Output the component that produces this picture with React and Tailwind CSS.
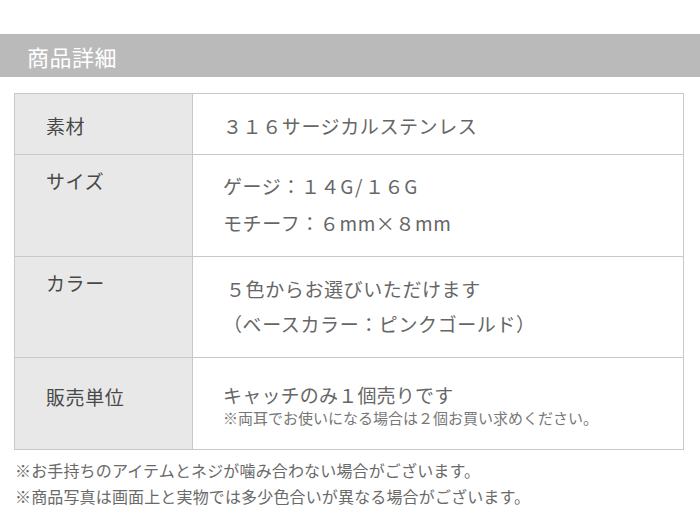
import React from "react";

const font = { fontFamily: '"Noto Sans CJK JP", "Noto Sans", sans-serif' };

export default function App() {
  return (
    <div className="w-[700px] h-[526px] bg-white overflow-hidden" style={font}>
      {/* section header */}
      <div className="mt-[34px] h-[43px] bg-[#bbbaba] pl-[27px] flex items-center text-white text-[22px] tracking-[0.5px] leading-none">
        商品詳細
      </div>

      {/* spec table */}
      <div className="ml-[14px] mt-[16px] w-[670px] border border-[#c8c8c8] text-[19px] tracking-[0.6px]">
        <div className="flex h-[61px] border-b border-[#c8c8c8]">
          <div className="w-[178px] shrink-0 bg-[#e9e8e9] border-r border-[#c8c8c8] pl-[31px] pt-[18px] leading-[28px] text-[#484848]">
            素材
          </div>
          <div className="pl-[30px] pt-[18px] leading-[28px] text-[#666]">
            ３１６サージカルステンレス
          </div>
        </div>

        <div className="flex h-[102px] border-b border-[#c8c8c8]">
          <div className="w-[178px] shrink-0 bg-[#e9e8e9] border-r border-[#c8c8c8] pl-[31px] pt-[12px] leading-[28px] text-[#484848]">
            サイズ
          </div>
          <div className="pl-[30px] pt-[12px] leading-[37px] text-[#666]">
            <p>
              ゲージ：１４G<span className="pl-[1px] pr-[2px]">/</span>１６G
            </p>
            <p>モチーフ：６mm×８mm</p>
          </div>
        </div>

        <div className="flex h-[101px] border-b border-[#c8c8c8]">
          <div className="w-[178px] shrink-0 bg-[#e9e8e9] border-r border-[#c8c8c8] pl-[31px] pt-[12px] leading-[28px] text-[#484848]">
            カラー
          </div>
          <div className="pl-[30px] pt-[14px] leading-[35px] text-[#666]">
            <p className="pl-[3px]">５色からお選びいただけます</p>
            <p>（ベースカラー：ピンクゴールド）</p>
          </div>
        </div>

        <div className="flex h-[91px]">
          <div className="w-[178px] shrink-0 bg-[#e9e8e9] border-r border-[#c8c8c8] pl-[31px] pt-[25px] leading-[28px] text-[#484848]">
            販売単位
          </div>
          <div className="pl-[30px] pt-[24px] text-[#666]">
            <p className="leading-[26px] tracking-[0.2px]">キャッチのみ１個売りです</p>
            <p className="text-[15px] leading-[20px] tracking-normal text-[#777]">
              ※両耳でお使いになる場合は２個お買い求めください。
            </p>
          </div>
        </div>
      </div>

      {/* notes */}
      <div className="ml-[15px] mt-[7px] text-[16px] leading-[26px] tracking-[0.15px] text-[#6a6a6a]">
        <p>※お手持ちのアイテムとネジが噛み合わない場合がございます。</p>
        <p>※商品写真は画面上と実物では多少色合いが異なる場合がございます。</p>
      </div>
    </div>
  );
}
